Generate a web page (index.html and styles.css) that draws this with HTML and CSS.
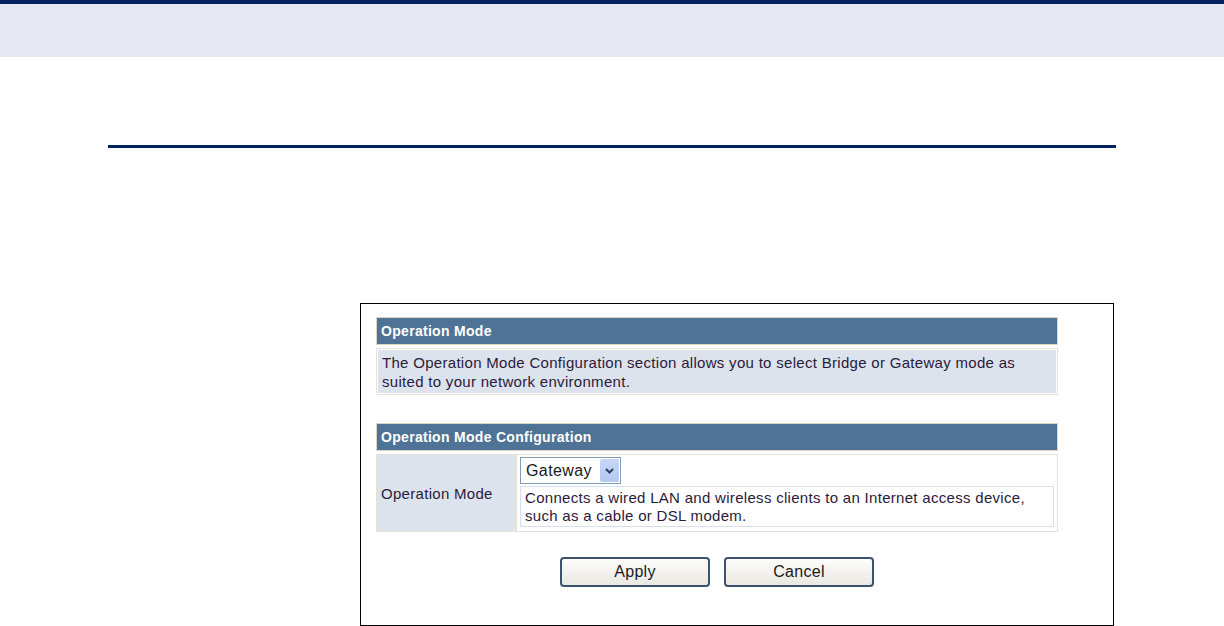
FILE: index.html
```html
<!DOCTYPE html>
<html lang="en">
<head>
<meta charset="UTF-8">
<title>Operation Mode</title>
<link rel="stylesheet" href="styles.css">
</head>
<body>
  <div class="topbar"></div>
  <div class="rule"></div>

  <div class="shot">
    <table class="section">
      <tr><th>Operation Mode</th></tr>
      <tr><td class="intro"><div class="intro-text">The Operation Mode Configuration section allows you to select Bridge or Gateway mode as suited to your network environment.</div></td></tr>
    </table>

    <table class="section config">
      <tr><th colspan="2">Operation Mode Configuration</th></tr>
      <tr>
        <td class="label">Operation Mode</td>
        <td class="value">
          <div class="select">
            <span>Gateway</span>
            <span class="arrow">
              <svg width="11" height="8" viewBox="0 0 11 8"><path d="M2 2 L5.5 5.5 L9 2" fill="none" stroke="#2a3f66" stroke-width="2"/></svg>
            </span>
          </div>
          <div class="hint">Connects a wired LAN and wireless clients to an Internet access device, such as a cable or DSL modem.</div>
        </td>
      </tr>
    </table>

    <div class="buttons">
      <button class="btn">Apply</button>
      <button class="btn">Cancel</button>
    </div>
  </div>
</body>
</html>
```

FILE: styles.css
```css
body {
  margin: 0;
  background: #ffffff;
  font-family: "Liberation Sans", Arial, sans-serif;
}

.topbar {
  height: 53px;
  border-top: 4px solid #00245f;
  background-color: #e5e8f1;
}

.rule {
  width: 1008px;
  height: 3px;
  margin: 88px 0 0 108px;
  background-color: #00245f;
}

.shot {
  width: 754px;
  height: 323px;
  margin: 155px 0 0 360px;
  border: 1px solid #000;
  padding-top: 10px;
  box-sizing: border-box;
}

.section {
  width: 682px;
  margin-left: 15px;
  border-collapse: separate;
  border-spacing: 0 3px;
  font-size: 15px;
  letter-spacing: 0.3px;
  color: #2b1a3a;
}

.section th {
  height: 26px;
  padding: 0 0 0 4px;
  text-align: left;
  color: #fff;
  font-size: 14px;
  letter-spacing: 0.3px;
  font-weight: bold;
  background-color: #4f7396;
  border: 1px solid #d9d6c6;
}

.section td {
  padding: 0;
  border: 1px solid #e6e3d6;
}

.intro {
  background-color: #fff;
}

.intro-text {
  margin: 1px;
  padding: 3px 4px 2px;
  height: 38px;
  line-height: 19px;
  background-color: #dce3ed;
}

.config {
  margin-top: 22px;
}

.label {
  width: 134px;
  padding-left: 4px !important;
  background-color: #dce3ed;
}

.value {
  padding: 2px 3px 4px 3px !important;
  background-color: #fff;
}

.select {
  display: inline-flex;
  align-items: center;
  width: 101px;
  height: 27px;
  border: 1px solid #7f9db9;
  box-sizing: border-box;
  padding-left: 5px;
  font-size: 16px;
  letter-spacing: 0.4px;
  color: #1a1a1a;
}

.select span:first-child {
  flex: 1;
}

.arrow {
  display: flex;
  align-items: center;
  justify-content: center;
  width: 19px;
  height: 23px;
  margin-right: 1px;
  background: linear-gradient(#c8d7f7, #b4c7f0);
  border-radius: 2px;
}

.hint {
  margin-top: 2px;
  padding: 2px 4px 1px;
  height: 36px;
  line-height: 18px;
  border: 1px solid #d6e0ee;
}

.buttons {
  display: flex;
  justify-content: center;
  gap: 14px;
  margin-top: 22px;
  padding-right: 40px;
}

.btn {
  width: 150px;
  height: 30px;
  font-family: "Liberation Sans", Arial, sans-serif;
  font-size: 16px;
  letter-spacing: 0.3px;
  color: #1a1a1a;
  border: 2px solid #3c5270;
  border-radius: 4px;
  background: linear-gradient(#fcfcfb, #e9e8e2);
  cursor: pointer;
}
```
